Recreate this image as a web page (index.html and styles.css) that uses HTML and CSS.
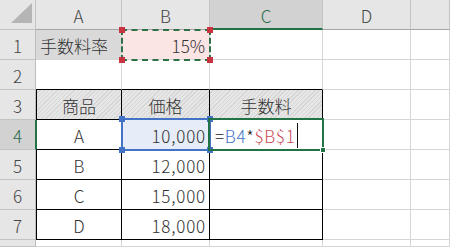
FILE: index.html
```html
<!DOCTYPE html>
<html lang="ja">
<head>
<meta charset="utf-8">
<title>Sheet</title>
<link rel="stylesheet" href="styles.css">
</head>
<body>
<div class="sheet">
  <div class="corner"><span class="tri"></span></div>
  <div class="ch">A</div>
  <div class="ch">B</div>
  <div class="ch sel">C</div>
  <div class="ch">D</div>
  <div class="ch"></div>

  <div class="rh">1</div>
  <div class="c lab">手数料率</div>
  <div class="c num rate">15%<span class="copy"><i class="h tl red"></i><i class="h tr red"></i><i class="h bl red"></i><i class="h br red"></i></span></div>
  <div class="c"></div>
  <div class="c"></div>
  <div class="c"></div>

  <div class="rh">2</div>
  <div class="c top"></div>
  <div class="c top"></div>
  <div class="c top"></div>
  <div class="c"></div>
  <div class="c"></div>

  <div class="rh tbl">3</div>
  <div class="c t first hatch mid">商品</div>
  <div class="c t hatch mid">価格</div>
  <div class="c t hatch mid">手数料</div>
  <div class="c"></div>
  <div class="c"></div>

  <div class="rh sel">4</div>
  <div class="c t first mid selrow">A</div>
  <div class="c t num wide ref">10,000<span class="refbox"><i class="h tl blue"></i><i class="h tr blue"></i><i class="h bl blue"></i><i class="h br blue"></i></span></div>
  <div class="c t edit"><span class="eq">=</span><span class="rb">B4</span><span class="eq">*</span><span class="rr">$B$1</span><span class="caret"></span><span class="active"><i class="fill"></i></span></div>
  <div class="c"></div>
  <div class="c"></div>

  <div class="rh tbl">5</div>
  <div class="c t first mid">B</div>
  <div class="c t num wide">12,000</div>
  <div class="c t"></div>
  <div class="c"></div>
  <div class="c"></div>

  <div class="rh tbl">6</div>
  <div class="c t first mid">C</div>
  <div class="c t num wide">15,000</div>
  <div class="c t"></div>
  <div class="c"></div>
  <div class="c"></div>

  <div class="rh tbl">7</div>
  <div class="c t first mid">D</div>
  <div class="c t num wide">18,000</div>
  <div class="c t"></div>
  <div class="c"></div>
  <div class="c"></div>

  <div class="rh"></div>
  <div class="c"></div>
  <div class="c"></div>
  <div class="c"></div>
  <div class="c"></div>
  <div class="c"></div>
</div>
</body>
</html>
```
FILE: styles.css
```css
* { box-sizing: border-box; }
body {
  margin: 0;
  background: #fff;
  font-family: "Noto Sans CJK JP", "Noto Sans", sans-serif;
  color: #333;
}
.sheet {
  display: grid;
  grid-template-columns: 36px 86px 88px 113px 88px 39px;
  grid-template-rows: 30px repeat(7, 30px) 7px;
  width: 450px;
  height: 247px;
  overflow: hidden;
}
.sheet > div {
  position: relative;
  display: flex;
  align-items: center;
  font-size: 17px;
  font-weight: 300;
  line-height: 1;
  white-space: nowrap;
}
.corner, .ch, .rh {
  background: #e6e6e6;
  border-right: 1px solid #c3c3c3;
  border-bottom: 1px solid #c3c3c3;
  color: #444;
  justify-content: center;
}
.ch { border-bottom-color: #a5a5a5; padding-top: 2px; }
.ch.sel {
  background: #d2d2d2;
  border-bottom: 2px solid #217346;
  color: #2b6a4a;
}
.rh { border-right-color: #bdbdbd; padding-top: 2px; }
.rh.sel {
  background: #d2d2d2;
  color: #2b6a4a;
  border-right: 1px solid #217346;
}
.corner { align-items: flex-end; justify-content: flex-end; padding: 0 3px 3px 0; }
.tri {
  display: block;
  width: 21px;
  height: 20px;
  background: #b5b5b5;
  clip-path: polygon(100% 0, 100% 100%, 0 100%);
}
.c {
  border-right: 1px solid #d6d6d6;
  border-bottom: 1px solid #d6d6d6;
  padding: 2px 4px 0;
}
.lab { background: #d9d9d9; }
.num { justify-content: flex-end; }
.wide { letter-spacing: 0.8px; padding-right: 3px; }
.mid { justify-content: center; }
.top { border-bottom-color: #000; }
.t { border-right-color: #000; border-bottom-color: #000; }
.first { border-left: 1px solid #000; }
.selrow { border-left-color: #217346; }
.hatch {
  background: repeating-linear-gradient(135deg, #e6e6e6 0 2px, #d6d6d6 2px 3px);
}
.rate { background: #fbe4e4; }
.ref { background: #e6edf8; }
.copy, .refbox, .active {
  position: absolute;
  z-index: 2;
}
.copy {
  left: -1px; top: -1px; right: -2px; bottom: -2px;
  border: 2px dashed #2f7147;
}
.refbox {
  left: -1px; top: -2px; right: -2px; bottom: -2px;
  border: 2px solid #4472c4;
}
.active {
  left: -2px; top: -2px; right: -2px; bottom: -2px;
  border: 2px solid #217346;
}
.h {
  position: absolute;
  width: 6px;
  height: 6px;
}
.h.red { background: #c8333f; }
.h.blue { background: #4472c4; }
.tl { left: -4px; top: -4px; }
.tr { right: -4px; top: -4px; }
.bl { left: -4px; bottom: -4px; }
.br { right: -4px; bottom: -4px; }
.fill {
  position: absolute;
  right: -4px;
  bottom: -4px;
  width: 6px;
  height: 6px;
  background: #217346;
  border: 1px solid #fff;
}
.edit { padding-left: 5px; letter-spacing: 0.7px; }
.eq { color: #222; }
.rb { color: #4472c4; }
.rr { color: #c94957; }
.caret {
  display: block;
  width: 1px;
  height: 25px;
  background: #111;
  margin-left: 2px;
}
```
